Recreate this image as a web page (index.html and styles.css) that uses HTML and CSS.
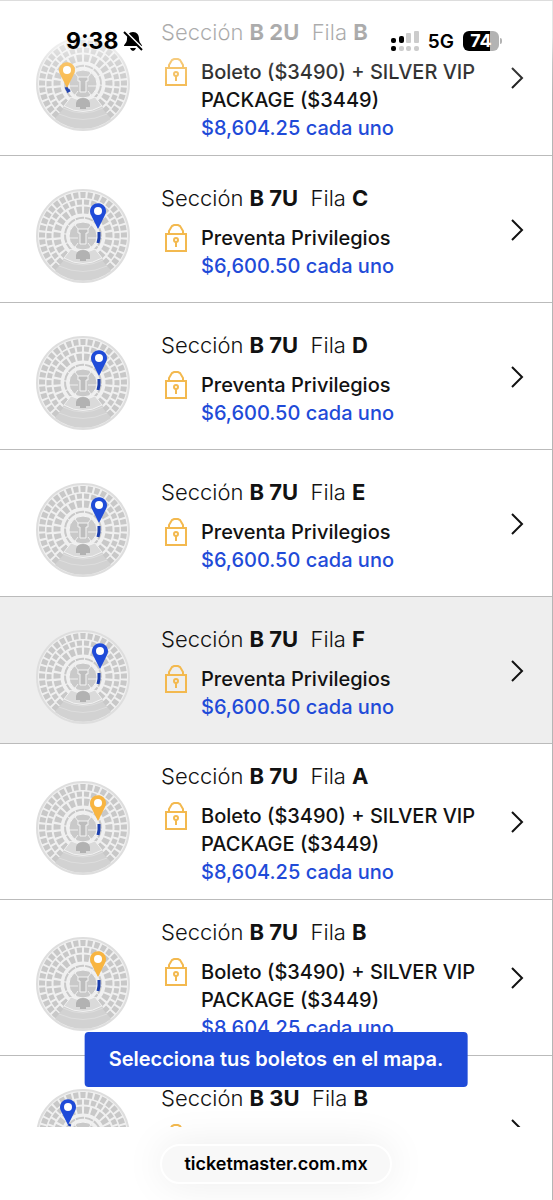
FILE: index.html
```html
<!DOCTYPE html>
<html lang="es">
<head>
	<meta charset="utf-8">
	<meta name="viewport" content="width=device-width, initial-scale=1">
	<title>Boletos</title>
	<link rel="stylesheet" href="styles.css">
</head>

<body>
	<!-- shared drawings -->
	<svg class="sprites" aria-hidden="true">
		<symbol id="venue" viewBox="0 0 94 94">
			<circle cx="47" cy="47" r="46" fill="#f0f0f0" stroke="#dedede" stroke-width="2"/>
			<path d="M28 69L19 82A45 45 0 0 0 75 82L66 69Z" fill="#d2d2d2"/>
			<path d="M27 71Q47 81 67 71M23 77Q47 88 71 77" fill="none" stroke="#dedede" stroke-width="1"/>
			<g fill="none" stroke="#c8c8c8">
				<path d="M21.4 79A41 41 0 1 1 72.6 79" stroke-width="6" pathLength="201" stroke-dasharray="5 2"/>
				<path d="M25.8 73.6A34 34 0 1 1 68.2 73.6" stroke-width="5" pathLength="166" stroke-dasharray="5 2"/>
				<path d="M30.8 67.3A26 26 0 1 1 63.2 67.3" stroke-width="7" pathLength="124" stroke-dasharray="5 2"/>
				<path d="M36 61A18 18 0 1 1 58 61" stroke-width="2" pathLength="86" stroke-dasharray="8 1"/>
			</g>
			<path d="M35 60Q47 66 59 60L66 69Q47 80 28 69Z" fill="#dadada" stroke="#f2f2f2" stroke-width="1"/>
			<circle cx="47" cy="47" r="14" fill="#c9c9c9" stroke="#f4f4f4" stroke-width="1"/>
			<path d="M33 49H42M52 49H61M39 36L42 40M55 36L52 40M39 58L42 54M55 58L52 54" stroke="#efefef" stroke-width="1"/>
			<path d="M42 40H52V44H50V55H44V44H42Z" fill="#bdbdbd" stroke="#f4f4f4" stroke-width="1"/>
			<path d="M40 70V66Q41 61 47 61T54 66V70H50V72H44V70Z" fill="#b2b2b2"/>
		</symbol>
		<symbol id="pin" viewBox="0 0 16 26">
			<path d="M8 26L1 12A8 8 0 1 1 15 12Z" fill="currentColor"/>
			<circle cx="8" cy="8" r="4" fill="#fff"/>
		</symbol>
		<symbol id="lock" viewBox="0 0 24 28">
			<g fill="none" stroke="currentColor" stroke-width="2">
				<path d="M2 10H22V27H2Z"/>
				<path d="M5 10V7L8 2L10 1H14L16 2L19 7V10"/>
				<circle cx="12" cy="16" r="2"/>
				<path d="M12 18V23"/>
			</g>
		</symbol>
		<symbol id="chevron" viewBox="0 0 14 22">
			<path d="M2 1L12 11L2 21" fill="none" stroke="currentColor" stroke-width="2"/>
		</symbol>
	</svg>

	<header class="statusbar">
		<span class="time">9:38</span>
		<svg class="bell" viewBox="0 0 20 20" role="img" aria-label="Silencio">
			<path d="M10 1C6 1 4 4 4 8C4 12 1 13 1 15H19C19 13 16 12 16 8C16 4 14 1 10 1Z"/>
			<path d="M7 17H13Q12 20 10 20T7 17Z"/>
			<path d="M2 0L20 18" stroke="#fff" stroke-width="2"/>
			<path d="M1 1L19 19" stroke="#000" stroke-width="2"/>
		</svg>
		<svg class="signal" viewBox="0 0 28 20" aria-hidden="true">
			<g fill="#000">
				<rect x="0" y="7" width="5" height="5" rx="2"/>
				<rect x="8" y="5" width="5" height="7" rx="2"/>
				<rect x="0" y="15" width="5" height="5" rx="2"/>
			</g>
			<g fill="#ccc">
				<rect x="15" y="2" width="5" height="10" rx="1"/>
				<rect x="23" y="0" width="5" height="12" rx="1"/>
				<rect x="8" y="15" width="5" height="5" rx="2"/>
				<rect x="15" y="15" width="5" height="5" rx="2"/>
				<rect x="23" y="15" width="5" height="5" rx="2"/>
			</g>
		</svg>
		<span class="network">5G</span>
		<span class="battery">74</span>
	</header>

	<ul class="tickets">
		<li>
			<a href="#" class="ticket">
				<svg class="map" viewBox="0 0 94 94" aria-hidden="true">
					<use href="#venue"/>
					<path class="seats" d="M30 50L32 54L34 53"/>
					<use class="gold" href="#pin" x="23" y="25" width="16" height="26"/>
				</svg>
				<div class="info">
					<h2>Sección <b>B 2U</b>&nbsp; Fila <b>B</b></h2>
					<svg class="lock"><use href="#lock"/></svg>
					<p>Boleto ($3490) + SILVER VIP PACKAGE ($3449)</p>
					<p class="price">$8,604.25 cada uno</p>
				</div>
				<svg class="chevron"><use href="#chevron"/></svg>
			</a>
		</li>
		<li>
			<a href="#" class="ticket">
				<svg class="map" viewBox="0 0 94 94" aria-hidden="true">
					<use href="#venue"/>
					<path class="seats" d="M63 43V49L62 54"/>
					<use class="blue" href="#pin" x="54" y="14" width="16" height="26"/>
				</svg>
				<div class="info">
					<h2>Sección <b>B 7U</b>&nbsp; Fila <b>C</b></h2>
					<svg class="lock"><use href="#lock"/></svg>
					<p>Preventa Privilegios</p>
					<p class="price">$6,600.50 cada uno</p>
				</div>
				<svg class="chevron"><use href="#chevron"/></svg>
			</a>
		</li>
		<li>
			<a href="#" class="ticket">
				<svg class="map" viewBox="0 0 94 94" aria-hidden="true">
					<use href="#venue"/>
					<path class="seats" d="M63 43V49L62 54"/>
					<use class="blue" href="#pin" x="55" y="14" width="16" height="26"/>
				</svg>
				<div class="info">
					<h2>Sección <b>B 7U</b>&nbsp; Fila <b>D</b></h2>
					<svg class="lock"><use href="#lock"/></svg>
					<p>Preventa Privilegios</p>
					<p class="price">$6,600.50 cada uno</p>
				</div>
				<svg class="chevron"><use href="#chevron"/></svg>
			</a>
		</li>
		<li>
			<a href="#" class="ticket">
				<svg class="map" viewBox="0 0 94 94" aria-hidden="true">
					<use href="#venue"/>
					<path class="seats" d="M63 43V49L62 54"/>
					<use class="blue" href="#pin" x="55" y="14" width="16" height="26"/>
				</svg>
				<div class="info">
					<h2>Sección <b>B 7U</b>&nbsp; Fila <b>E</b></h2>
					<svg class="lock"><use href="#lock"/></svg>
					<p>Preventa Privilegios</p>
					<p class="price">$6,600.50 cada uno</p>
				</div>
				<svg class="chevron"><use href="#chevron"/></svg>
			</a>
		</li>
		<li>
			<a href="#" class="ticket active">
				<svg class="map" viewBox="0 0 94 94" aria-hidden="true">
					<use href="#venue"/>
					<path class="seats" d="M63 43V49L62 54"/>
					<use class="blue" href="#pin" x="56" y="13" width="16" height="26"/>
				</svg>
				<div class="info">
					<h2>Sección <b>B 7U</b>&nbsp; Fila <b>F</b></h2>
					<svg class="lock"><use href="#lock"/></svg>
					<p>Preventa Privilegios</p>
					<p class="price">$6,600.50 cada uno</p>
				</div>
				<svg class="chevron"><use href="#chevron"/></svg>
			</a>
		</li>
		<li>
			<a href="#" class="ticket">
				<svg class="map" viewBox="0 0 94 94" aria-hidden="true">
					<use href="#venue"/>
					<path class="seats" d="M63 43V49L62 54"/>
					<use class="gold" href="#pin" x="54" y="14" width="16" height="26"/>
				</svg>
				<div class="info">
					<h2>Sección <b>B 7U</b>&nbsp; Fila <b>A</b></h2>
					<svg class="lock"><use href="#lock"/></svg>
					<p>Boleto ($3490) + SILVER VIP PACKAGE ($3449)</p>
					<p class="price">$8,604.25 cada uno</p>
				</div>
				<svg class="chevron"><use href="#chevron"/></svg>
			</a>
		</li>
		<li>
			<a href="#" class="ticket">
				<svg class="map" viewBox="0 0 94 94" aria-hidden="true">
					<use href="#venue"/>
					<path class="seats" d="M63 43V49L62 54"/>
					<use class="gold" href="#pin" x="54" y="14" width="16" height="26"/>
				</svg>
				<div class="info">
					<h2>Sección <b>B 7U</b>&nbsp; Fila <b>B</b></h2>
					<svg class="lock"><use href="#lock"/></svg>
					<p>Boleto ($3490) + SILVER VIP PACKAGE ($3449)</p>
					<p class="price">$8,604.25 cada uno</p>
				</div>
				<svg class="chevron"><use href="#chevron"/></svg>
			</a>
		</li>
		<li>
			<a href="#" class="ticket">
				<svg class="map" viewBox="0 0 94 94" aria-hidden="true">
					<use href="#venue"/>
					<path class="seats" d="M33 37L34 35"/>
					<use class="blue" href="#pin" x="24" y="10" width="16" height="26"/>
				</svg>
				<div class="info">
					<h2>Sección <b>B 3U</b>&nbsp; Fila <b>B</b></h2>
					<svg class="lock"><use href="#lock"/></svg>
					<p>&nbsp;</p>
					<p class="price">&nbsp;</p>
				</div>
				<svg class="chevron"><use href="#chevron"/></svg>
			</a>
		</li>
	</ul>

	<footer class="browserbar">
		<div class="toast" role="status">Selecciona tus boletos en el mapa.</div>
		<button type="button" class="address">ticketmaster.com.mx</button>
	</footer>
</body>
</html>
```

FILE: styles.css
```css
* {
	box-sizing: border-box;
}

body {
	display: flex;
	flex-direction: column;
	height: 100vh;
	margin: 0;
	overflow: hidden;
	background: #fff;
	color: #121212;
	font-family: Inter, "Open Sans", sans-serif;
	border-right: 1px solid #b5b5b5;
}

.sprites {
	position: absolute;
	width: 0;
	height: 0;
}

/* phone status bar, fades the list under it */
.statusbar {
	position: absolute;
	top: 0;
	left: 0;
	right: 0;
	z-index: 1;
	display: flex;
	align-items: center;
	height: 96px;
	padding: 0 54px 15px 66px;
	border-top: 1px solid #ddd;
	background: linear-gradient(rgba(255, 255, 255, .65) 36px, rgba(255, 255, 255, .2) 62px, rgba(255, 255, 255, 0));
	color: #000;
	font-weight: 700;
	pointer-events: none;
}

.time {
	font-size: 23px;
}

.bell {
	width: 20px;
	height: 20px;
	margin-left: 5px;
}

.signal {
	width: 28px;
	height: 20px;
	margin-left: auto;
}

.network {
	margin: 0 9px;
	font-size: 19px;
	font-weight: 600;
}

.battery {
	position: relative;
	width: 36px;
	border-radius: 6px;
	background: linear-gradient(to right, #000 75%, #b3b3b3 75%);
	color: #fff;
	font-size: 18px;
	line-height: 20px;
	text-align: center;
}

.battery::after {
	content: "";
	position: absolute;
	top: 7px;
	right: -3px;
	width: 2px;
	height: 6px;
	border-radius: 0 2px 2px 0;
	background: #b3b3b3;
}

.tickets {
	flex: 1;
	min-height: 0;
	margin: 0;
	padding: 0;
	overflow: hidden;
	list-style: none;
}

.ticket {
	display: flex;
	align-items: center;
	min-height: 147px;
	padding: 18px 28px 13px 36px;
	border-bottom: 1px solid #bbb;
	color: inherit;
	text-decoration: none;
}

.ticket.active {
	background: #eee;
}

.map {
	flex: none;
	width: 94px;
	height: 94px;
	margin-top: 8px;
}

.seats {
	fill: none;
	stroke: #1c3fae;
	stroke-width: 3;
}

.gold {
	color: #f8b541;
}

.blue {
	color: #1f4bd8;
}

.info {
	flex: 1;
	display: grid;
	grid-template-columns: 28px 1fr;
	column-gap: 12px;
	margin: 0 10px 0 31px;
}

.info h2 {
	grid-column: 1 / 3;
	margin: 0 0 12px;
	font-size: 22px;
	font-weight: 300;
	line-height: 28px;
}

.info h2 b {
	font-weight: 700;
}

.info p {
	grid-column: 2;
	margin: 0;
	font-size: 20px;
	font-weight: 500;
	line-height: 28px;
}

.info .price {
	color: #1f4bd8;
}

.lock {
	width: 24px;
	height: 28px;
	margin-left: 3px;
	color: #f3b94f;
}

.chevron {
	flex: none;
	width: 14px;
	height: 22px;
	margin-bottom: 4px;
}

.browserbar {
	position: relative;
	display: flex;
	justify-content: center;
	align-items: center;
	height: 73px;
}

.toast {
	position: absolute;
	bottom: 113px;
	left: 50%;
	transform: translateX(-50%);
	z-index: 1;
	padding: 0 24px;
	border-radius: 4px;
	background: #1f4bd8;
	color: #fff;
	font-size: 20px;
	font-weight: 600;
	line-height: 55px;
	white-space: nowrap;
}

.address {
	height: 40px;
	padding: 0 22px;
	border: 2px solid #fff;
	border-radius: 20px;
	background: #f8f8f8;
	box-shadow: 0 0 40px rgba(0, 0, 0, .08);
	color: #000;
	font-family: inherit;
	font-size: 18px;
	font-weight: 600;
}
```
